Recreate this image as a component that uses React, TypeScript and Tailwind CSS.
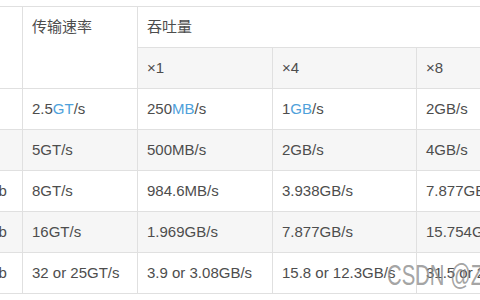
type Part = { t: string; link?: boolean };
type Cell = Part[];

const font = '"Liberation Sans", Arial, "Noto Sans CJK SC", sans-serif';

const p = (t: string): Cell => [{ t }];

const rows: Cell[][] = [
  [
    p('8b/10b'),
    [{ t: '2.5' }, { t: 'GT', link: true }, { t: '/s' }],
    [{ t: '250' }, { t: 'MB', link: true }, { t: '/s' }],
    [{ t: '1' }, { t: 'GB', link: true }, { t: '/s' }],
    p('2GB/s'),
    p('4GB/s'),
  ],
  [p('8b/10b'), p('5GT/s'), p('500MB/s'), p('2GB/s'), p('4GB/s'), p('8GB/s')],
  [p('128b/130b'), p('8GT/s'), p('984.6MB/s'), p('3.938GB/s'), p('7.877GB/s'), p('15.754GB/s')],
  [p('128b/130b'), p('16GT/s'), p('1.969GB/s'), p('7.877GB/s'), p('15.754GB/s'), p('31.508GB/s')],
  [
    p('128b/130b'),
    p('32 or 25GT/s'),
    p('3.9 or 3.08GB/s'),
    p('15.8 or 12.3GB/s'),
    p('31.5 or 24.6GB/s'),
    p('63 or 49.2GB/s'),
  ],
];

const widths = ['w-[96px]', 'w-[115px]', 'w-[135px]', 'w-[144px]', 'w-[144px]', 'w-[144px]'];

const cell =
  'border border-[#e0e0e0] px-[9px] pt-[8px] pb-[9px] leading-[23px] text-left font-normal whitespace-nowrap';

export default function App() {
  return (
    <div
      className="relative w-[480px] h-[300px] overflow-hidden bg-white pt-[6px] text-[15px] text-[#4d4d4d]"
      style={{ fontFamily: font }}
    >
      <table className="ml-[-74px] w-[778px] table-fixed border-collapse">
        <colgroup>
          {widths.map((w, i) => (
            <col key={i} className={w} />
          ))}
        </colgroup>
        <thead>
          <tr className="bg-white">
            <th rowSpan={2} className={`${cell} align-top`}>编码方式</th>
            <th rowSpan={2} className={`${cell} align-top`}>传输速率</th>
            <th colSpan={4} className={cell}>吞吐量</th>
          </tr>
          <tr className="bg-[#f6f6f6]">
            {['×1', '×4', '×8', '×16'].map((x) => (
              <th key={x} className={cell}>{x}</th>
            ))}
          </tr>
        </thead>
        <tbody>
          {rows.map((r, i) => (
            <tr key={i} className={i % 2 === 1 ? 'bg-[#f6f6f6]' : 'bg-white'}>
              {r.map((c, j) => (
                <td key={j} className={cell}>
                  {c.map((part, k) =>
                    part.link ? (
                      <span key={k} className="text-[#4ea1db]">{part.t}</span>
                    ) : (
                      <span key={k}>{part.t}</span>
                    ),
                  )}
                </td>
              ))}
            </tr>
          ))}
        </tbody>
      </table>

      {/* watermark */}
      <div className="absolute left-[387px] top-[257px] origin-left scale-x-[0.7] text-[29px] leading-[36px] whitespace-nowrap text-[#8c8c8c]/80">
        CSDN @Zhang
      </div>
    </div>
  );
}
